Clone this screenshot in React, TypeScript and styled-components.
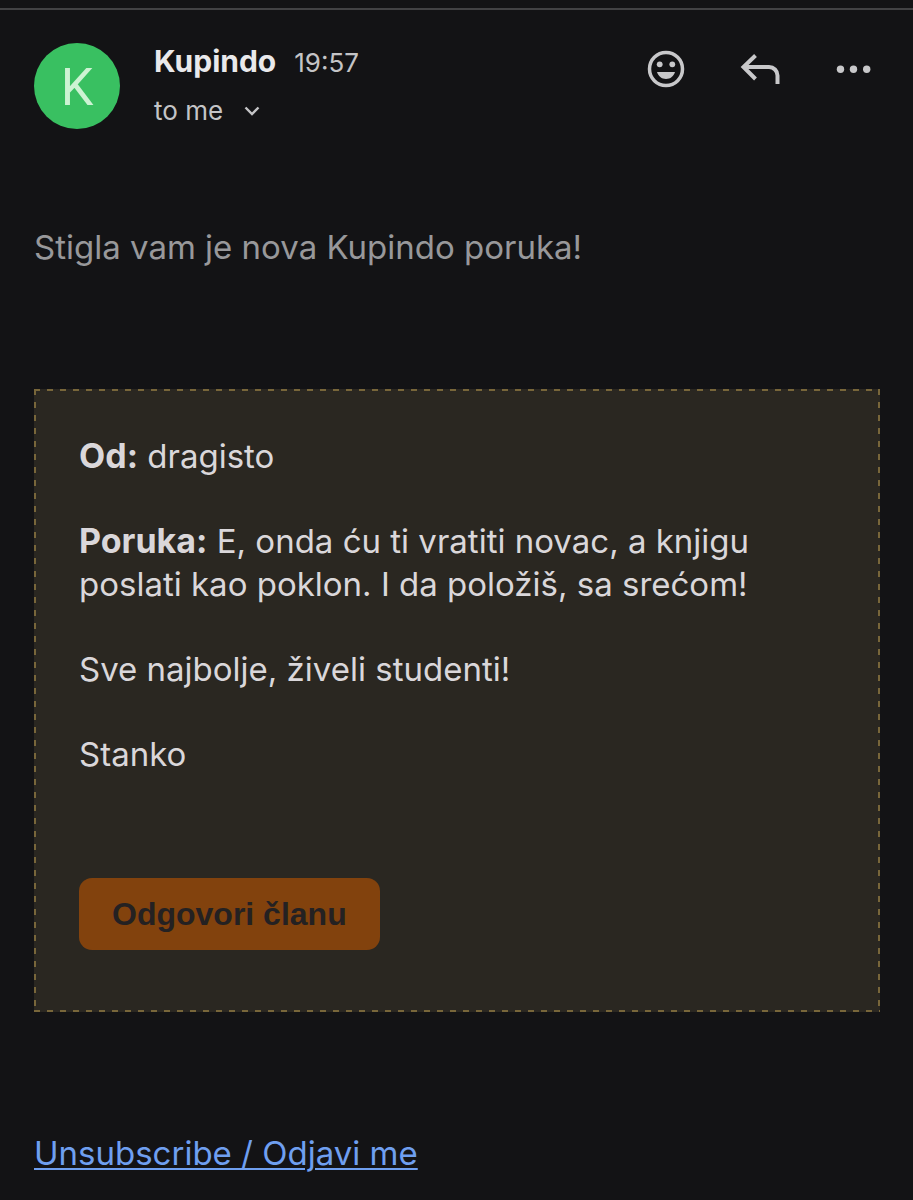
import React from "react";
import styled, { createGlobalStyle } from "styled-components";

const GlobalStyle = createGlobalStyle`
  *, *::before, *::after { box-sizing: border-box; }
  body {
    margin: 0;
    background: #131315;
    color: #dad7da;
    font-family: Inter, "Liberation Sans", sans-serif;
  }
  p { margin: 0; }
`;

const Page = styled.main`
  min-height: 100vh;
  padding-top: 8px;
`;

const Message = styled.article`
  border-top: 2px solid #424244;
  padding: 33px 33px 22px 34px;
`;

const Header = styled.header`
  display: flex;
  align-items: flex-start;
`;

const Avatar = styled.div`
  flex: none;
  width: 86px;
  height: 86px;
  border-radius: 50%;
  background: #39c061;
  color: #cdf3d3;
  font-family: Roboto, Inter, sans-serif;
  font-size: 52px;
  line-height: 90px;
  font-weight: 400;
  text-align: center;
`;

const Sender = styled.div`
  flex: 1;
  padding-left: 34px;
`;

const SenderLine = styled.div`
  display: flex;
  align-items: baseline;
  gap: 18px;
  line-height: 36px;
`;

const Name = styled.span`
  color: #e9e9eb;
  font-size: 30px;
  font-weight: 700;
`;

const Time = styled.time`
  color: #c4c4c6;
  font-size: 26px;
`;

const Recipient = styled.button`
  display: flex;
  align-items: center;
  gap: 21px;
  margin-top: 12px;
  padding: 0;
  border: 0;
  background: none;
  color: #c4c4c6;
  font: inherit;
  font-size: 26px;
  line-height: 36px;
`;

const Actions = styled.div`
  display: flex;
  gap: 54px;
  padding: 6px 6px 0 0;
`;

const IconButton = styled.button`
  display: block;
  padding: 0;
  border: 0;
  background: none;
  color: #c8c8ca;
  svg { display: block; }
`;

const Intro = styled.p`
  margin-top: 97px;
  color: #98989a;
  font-size: 33px;
  line-height: 43px;
`;

const dash = "#78663a 0 6px, transparent 6px 13px";

const Card = styled.section`
  margin-top: 120px;
  padding: 46px 45px 62px;
  background:
    repeating-linear-gradient(90deg, ${dash}) top / 100% 2px no-repeat,
    repeating-linear-gradient(90deg, ${dash}) bottom / 100% 2px no-repeat,
    repeating-linear-gradient(180deg, ${dash}) left / 2px 100% no-repeat,
    repeating-linear-gradient(180deg, ${dash}) right / 2px 100% no-repeat,
    #2a2721;
`;

const CardText = styled.div`
  display: flex;
  flex-direction: column;
  gap: 42px;
  font-size: 33px;
  line-height: 43px;
`;

const Label = styled.strong`
  font-size: 34px;
  line-height: 36px;
`;

const ReplyButton = styled.button`
  display: block;
  margin-top: 102px;
  padding: 0 33px;
  border: 0;
  border-radius: 13px;
  background: #82420d;
  color: #242122;
  font-family: "Liberation Sans", Arial, sans-serif;
  font-size: 32px;
  font-weight: 700;
  line-height: 72px;
`;

const Footer = styled.footer`
  margin-top: 120px;
  font-size: 33px;
  line-height: 43px;
`;

const Unsubscribe = styled.a`
  color: #6f9ff0;
  text-decoration-thickness: 2px;
  text-underline-offset: 3px;
`;

export default function App() {
  return (
    <Page>
      <GlobalStyle />
      <Message>
        <Header>
          <Avatar>K</Avatar>
          <Sender>
            <SenderLine>
              <Name>Kupindo</Name>
              <Time>19:57</Time>
            </SenderLine>
            <Recipient type="button">
              to me
              <svg width="16" height="10" viewBox="0 0 16 10" fill="none" stroke="currentColor" strokeWidth="2.4" aria-hidden="true">
                <path d="M1.5 1.5 8 8l6.500-6.500" />
              </svg>
            </Recipient>
          </Sender>
          <Actions>
            <IconButton type="button" aria-label="Add reaction">
              <svg width="40" height="40" viewBox="0 0 40 40" fill="currentColor">
                <circle cx="20" cy="20" r="16.500" fill="none" stroke="currentColor" strokeWidth="3.500" />
                <circle cx="13.700" cy="15.300" r="2.900" />
                <circle cx="26.300" cy="15.300" r="2.900" />
                <path d="M11 23h18c-1.200 4.200-4.700 7-9 7s-7.800-2.800-9-7z" />
              </svg>
            </IconButton>
            <IconButton type="button" aria-label="Reply">
              <svg width="40" height="40" viewBox="0 0 40 40" fill="none" stroke="currentColor" strokeWidth="4">
                <path d="M15.500 6.500 3.500 18l12 12M3.500 18H29a8.500 8.500 0 0 1 8.500 8.500V35" />
              </svg>
            </IconButton>
            <IconButton type="button" aria-label="More options">
              <svg width="40" height="40" viewBox="0 0 40 40" fill="currentColor">
                <circle cx="6.500" cy="20.300" r="3.700" />
                <circle cx="19.500" cy="20.300" r="3.700" />
                <circle cx="32.700" cy="20.300" r="3.700" />
              </svg>
            </IconButton>
          </Actions>
        </Header>

        <Intro>Stigla vam je nova Kupindo poruka!</Intro>

        <Card>
          <CardText>
            <p><Label>Od:</Label> dragisto</p>
            <p>
              <Label>Poruka:</Label> E, onda ću ti vratiti novac, a knjigu poslati kao poklon. I da položiš, sa srećom!
            </p>
            <p>Sve najbolje, živeli studenti!</p>
            <p>Stanko</p>
          </CardText>
          <ReplyButton type="button">Odgovori članu</ReplyButton>
        </Card>

        <Footer>
          <Unsubscribe href="#unsubscribe">Unsubscribe / Odjavi me</Unsubscribe>
        </Footer>
      </Message>
    </Page>
  );
}
